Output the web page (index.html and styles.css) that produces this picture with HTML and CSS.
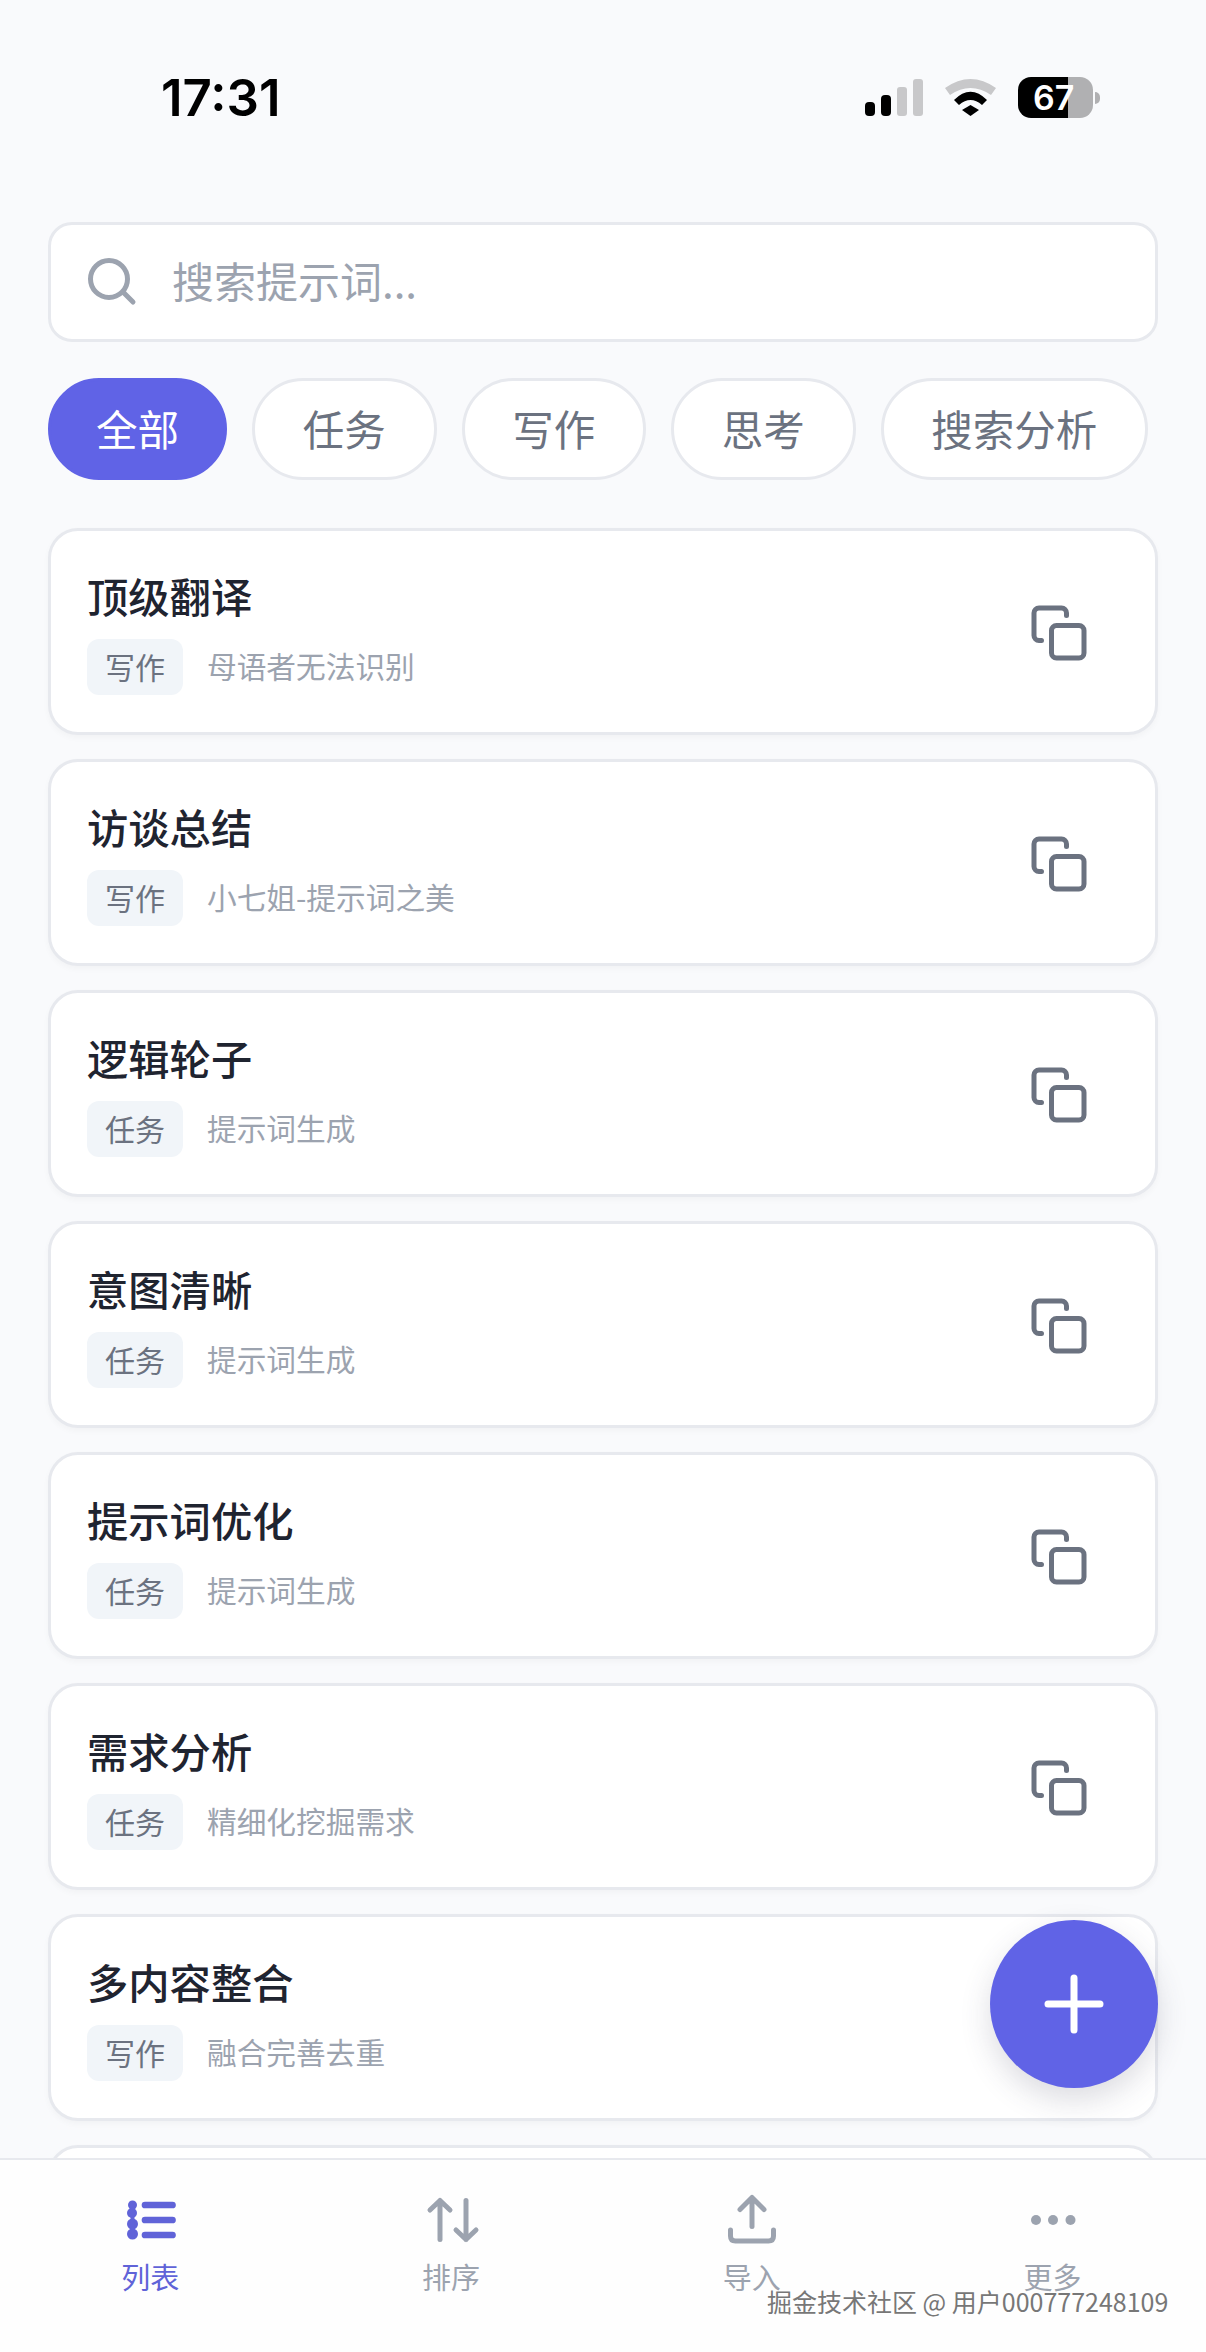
FILE: index.html
```html
<!DOCTYPE html>
<html lang="zh">
<head>
  <meta charset="utf-8">
  <title>提示词</title>
  <link rel="stylesheet" href="styles.css">
</head>
<body>
  <svg class="sprite" xmlns="http://www.w3.org/2000/svg">
    <symbol id="copy" viewBox="0 0 24 24">
      <rect x="9" y="9" width="13" height="13" rx="2"></rect>
      <path d="M5 15H4a2 2 0 0 1-2-2V4a2 2 0 0 1 2-2h9a2 2 0 0 1 2 2v1"></path>
    </symbol>
  </svg>

  <div class="page">
    <div class="status-bar">
      <span class="time">17:31</span>
      <div class="status-icons">
        <svg class="signal" width="58" height="37" viewBox="0 0 58 37">
          <rect x="0" y="23" width="10" height="14" rx="4" fill="#000"></rect>
          <rect x="16" y="16" width="10" height="21" rx="4" fill="#000"></rect>
          <rect x="32" y="8" width="10" height="29" rx="3" fill="#c8c8ca"></rect>
          <rect x="48" y="0" width="10" height="37" rx="3" fill="#c8c8ca"></rect>
        </svg>
        <svg class="wifi" width="51" height="37" viewBox="0 0 51 37">
          <path d="M0 9Q25.500-9 51 9L46 16Q25.500 2 5 16Z" fill="#c8c8ca"></path>
          <path d="M9 21Q25.500 4.500 42 21L37 26Q25.500 16 14 26Z" fill="#000"></path>
          <path d="M17 31L25.500 26L34 31L25.500 37Z" fill="#000"></path>
        </svg>
        <div class="battery-wrap">
          <div class="battery">67</div>
          <div class="battery-cap"></div>
        </div>
      </div>
    </div>

    <div class="list-area">
      <div class="search-box">
        <svg class="search-icon" width="54" height="54" viewBox="0 0 54 54">
          <circle cx="22" cy="24" r="18.500"></circle>
          <path d="M36 37L46 47"></path>
        </svg>
        <span class="search-text">搜索提示词...</span>
      </div>

      <div class="tabs">
        <div class="tab active">全部</div>
        <div class="tab">任务</div>
        <div class="tab">写作</div>
        <div class="tab">思考</div>
        <div class="tab">搜索分析</div>
      </div>

      <div class="cards">
        <div class="card">
          <div class="card-body">
            <div class="card-title">顶级翻译</div>
            <div class="card-meta"><span class="tag">写作</span><span class="desc">母语者无法识别</span></div>
          </div>
          <svg class="copy-icon"><use href="#copy"></use></svg>
        </div>
        <div class="card">
          <div class="card-body">
            <div class="card-title">访谈总结</div>
            <div class="card-meta"><span class="tag">写作</span><span class="desc">小七姐-提示词之美</span></div>
          </div>
          <svg class="copy-icon"><use href="#copy"></use></svg>
        </div>
        <div class="card">
          <div class="card-body">
            <div class="card-title">逻辑轮子</div>
            <div class="card-meta"><span class="tag">任务</span><span class="desc">提示词生成</span></div>
          </div>
          <svg class="copy-icon"><use href="#copy"></use></svg>
        </div>
        <div class="card">
          <div class="card-body">
            <div class="card-title">意图清晰</div>
            <div class="card-meta"><span class="tag">任务</span><span class="desc">提示词生成</span></div>
          </div>
          <svg class="copy-icon"><use href="#copy"></use></svg>
        </div>
        <div class="card">
          <div class="card-body">
            <div class="card-title">提示词优化</div>
            <div class="card-meta"><span class="tag">任务</span><span class="desc">提示词生成</span></div>
          </div>
          <svg class="copy-icon"><use href="#copy"></use></svg>
        </div>
        <div class="card">
          <div class="card-body">
            <div class="card-title">需求分析</div>
            <div class="card-meta"><span class="tag">任务</span><span class="desc">精细化挖掘需求</span></div>
          </div>
          <svg class="copy-icon"><use href="#copy"></use></svg>
        </div>
        <div class="card">
          <div class="card-body">
            <div class="card-title">多内容整合</div>
            <div class="card-meta"><span class="tag">写作</span><span class="desc">融合完善去重</span></div>
          </div>
          <svg class="copy-icon"><use href="#copy"></use></svg>
        </div>
        <div class="card"></div>
      </div>
    </div>

    <div class="nav">
      <div class="nav-item active">
        <svg class="nav-icon" width="60" height="60" viewBox="0 0 60 60">
          <circle class="fill-blob" cx="12.500" cy="15" r="4.500"></circle>
          <circle class="fill-blob" cx="12" cy="23" r="5"></circle>
          <circle class="fill-blob" cx="12.500" cy="34" r="5.500"></circle>
          <circle class="fill-blob" cx="12.500" cy="44" r="5.500"></circle>
          <path class="link-line" d="M12.500 15V44"></path>
          <path class="bar-line" d="M25 15H52.500M25 30H52.500M25 45H52.500"></path>
        </svg>
        <span>列表</span>
      </div>
      <div class="nav-item">
        <svg class="nav-icon" width="60" height="60" viewBox="0 0 60 60">
          <path d="M19 49.500V10.500M9 20L19 10.500L29 20M45 10.500V49.500M35 40L45 49.500L55 40"></path>
        </svg>
        <span>排序</span>
      </div>
      <div class="nav-item">
        <svg class="nav-icon" width="60" height="60" viewBox="0 0 60 60">
          <path d="M30 36.500V7.500M18 19.500L30 7.500L42 19.500M8.500 40V46Q8.500 51 13.500 51H46.500Q51.500 51 51.500 46V40"></path>
        </svg>
        <span>导入</span>
      </div>
      <div class="nav-item">
        <svg class="nav-icon dots" width="60" height="60" viewBox="0 0 60 60">
          <circle cx="13" cy="30" r="5"></circle>
          <circle cx="30" cy="30" r="5"></circle>
          <circle cx="47.500" cy="30" r="5"></circle>
        </svg>
        <span>更多</span>
      </div>
    </div>

    <div class="fab">
      <svg width="60" height="60" viewBox="0 0 60 60">
        <path d="M30 4V56M4 30H56"></path>
      </svg>
    </div>

    <div class="watermark">掘金技术社区 @ 用户000777248109</div>
  </div>
</body>
</html>
```

FILE: styles.css
```css
* {
  box-sizing: border-box;
}
body {
  margin: 0;
  font-family: "Noto Sans CJK SC", "Noto Sans", sans-serif;
  background: #f9fafc;
}
.sprite {
  display: none;
}
.page {
  position: relative;
  width: 1206px;
  height: 2352px;
  display: flex;
  flex-direction: column;
  overflow: hidden;
}

/* status bar */
.status-bar {
  height: 222px;
  flex-shrink: 0;
  display: flex;
  justify-content: space-between;
  align-items: flex-start;
  padding: 63px 106px 0 161px;
}
.time {
  font-family: Inter, "Liberation Sans", sans-serif;
  font-size: 51px;
  line-height: 70px;
  font-weight: 600;
  color: #000;
}
.status-icons {
  display: flex;
  align-items: center;
  gap: 22px;
  padding-top: 14px;
}
.battery-wrap {
  display: flex;
  align-items: center;
  gap: 2px;
}
.battery {
  width: 75px;
  height: 41px;
  border-radius: 13px;
  background: linear-gradient(90deg, #000 50px, #b0b0b2 50px);
  color: #fff;
  font-family: Inter, "Liberation Sans", sans-serif;
  font-size: 34px;
  line-height: 41px;
  font-weight: 600;
  padding-left: 15px;
}
.battery-cap {
  width: 5px;
  height: 12px;
  border-radius: 0 6px 6px 0;
  background: #b0b0b2;
}

/* search + tabs + cards */
.list-area {
  flex: 1;
  min-height: 0;
  overflow: hidden;
  padding: 0 48px;
}
.search-box {
  height: 120px;
  display: flex;
  align-items: center;
  gap: 31px;
  padding: 0 36px;
  background: #fff;
  border: 3px solid #e7e9ee;
  border-radius: 24px;
}
.search-icon {
  fill: none;
  stroke: #9ca3af;
  stroke-width: 5;
  stroke-linecap: round;
}
.search-text {
  font-size: 42px;
  padding-bottom: 6px;
  color: #9ca3af;
}
.tabs {
  display: flex;
  gap: 25px;
  margin-top: 36px;
}
.tab {
  height: 102px;
  padding: 0 47.750px 3px;
  display: flex;
  align-items: center;
  background: #fff;
  border: 3px solid #e7e9ee;
  border-radius: 51px;
  font-size: 41.500px;
  color: #6b7280;
}
.tab.active {
  background: #6063e6;
  border-color: #6063e6;
  color: #fff;
  padding: 0 45px 3px;
}
.cards {
  display: flex;
  flex-direction: column;
  gap: 24px;
  margin-top: 48px;
}
.card {
  flex-shrink: 0;
  height: 207px;
  display: flex;
  align-items: center;
  justify-content: space-between;
  padding: 0 66.500px 0 36px;
  background: #fff;
  border: 3px solid #e7e9ee;
  border-radius: 30px;
  box-shadow: 0 3px 6px rgba(0, 0, 0, 0.03);
}
.card-title {
  font-size: 41.300px;
  line-height: 54px;
  font-weight: 500;
  color: #1f2430;
}
.card-meta {
  display: flex;
  align-items: center;
  gap: 24px;
  margin-top: 17px;
}
.tag {
  height: 56px;
  padding: 0 18px 3px;
  display: flex;
  align-items: center;
  background: #f1f5f9;
  border-radius: 12px;
  font-size: 30px;
  color: #6b7280;
}
.desc {
  font-size: 29.700px;
  padding-bottom: 3px;
  color: #9ca3af;
}
.copy-icon {
  width: 60px;
  height: 60px;
  margin-top: 3px;
  fill: none;
  stroke: #6b7280;
  stroke-width: 2;
  stroke-linecap: round;
  stroke-linejoin: round;
}

/* bottom nav */
.nav {
  height: 194px;
  flex-shrink: 0;
  display: grid;
  grid-template-columns: repeat(4, 1fr);
  padding: 30px 3px 0 0;
  background: #fefefe;
  border-top: 2px solid #e7e9ee;
}
.nav-item {
  display: flex;
  flex-direction: column;
  align-items: center;
  font-size: 29px;
  line-height: 42px;
  color: #9ca3af;
}
.nav-item.active {
  color: #6063d8;
}
.nav-icon {
  margin-bottom: 5px;
  fill: none;
  stroke: #9ca3af;
  stroke-width: 5;
  stroke-linecap: round;
  stroke-linejoin: round;
}
.nav-icon.dots {
  fill: #9ca3af;
  stroke: none;
}
.active .nav-icon .fill-blob {
  fill: #6063d8;
  stroke: none;
}
.active .nav-icon .link-line {
  stroke: #6063d8;
  stroke-width: 4;
}
.active .nav-icon .bar-line {
  stroke: #6063d8;
  stroke-width: 6.700;
}

/* things on top */
.fab {
  position: absolute;
  left: 990px;
  top: 1920px;
  width: 168px;
  height: 168px;
  display: flex;
  align-items: center;
  justify-content: center;
  background: #6063e6;
  border-radius: 50%;
  box-shadow: 0 12px 30px rgba(60, 60, 90, 0.18);
}
.fab svg {
  fill: none;
  stroke: #fff;
  stroke-width: 7;
  stroke-linecap: round;
}
.watermark {
  position: absolute;
  left: 767px;
  top: 2284px;
  font-size: 25px;
  line-height: 34px;
  white-space: nowrap;
  color: #777;
  text-shadow: 1px 1px 1px #fff, -1px -1px 0 rgba(255, 255, 255, 0.7);
}
```
